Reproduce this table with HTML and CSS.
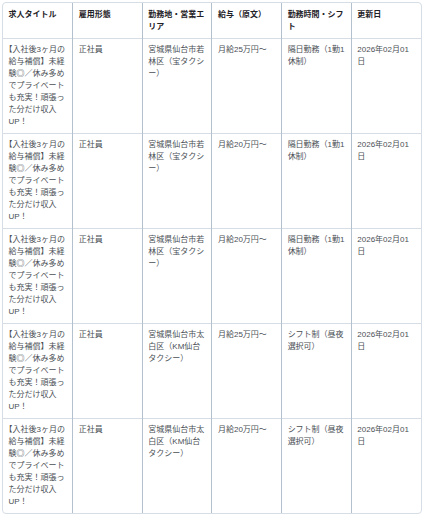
FILE: index.html
```html
<!DOCTYPE html>
<html lang="ja">
<head>
<meta charset="utf-8">
<title>求人一覧</title>
<link rel="stylesheet" href="styles.css">
</head>
<body>
<div class="table-wrap">
<table class="jobs">
<thead>
<tr>
<th>求人タイトル</th>
<th>雇用形態</th>
<th>勤務地・営業エリア</th>
<th>給与（原文）</th>
<th>勤務時間・シフト</th>
<th>更新日</th>
</tr>
</thead>
<tbody>
<tr>
<td>【入社後3ヶ月の給与補償】未経験◎／休み多めでプライベートも充実！頑張った分だけ収入UP！</td>
<td>正社員</td>
<td>宮城県仙台市若林区（宝タクシー）</td>
<td>月給25万円〜</td>
<td>隔日勤務（1勤1休制）</td>
<td>2026年02月01日</td>
</tr>
<tr>
<td>【入社後3ヶ月の給与補償】未経験◎／休み多めでプライベートも充実！頑張った分だけ収入UP！</td>
<td>正社員</td>
<td>宮城県仙台市若林区（宝タクシー）</td>
<td>月給20万円〜</td>
<td>隔日勤務（1勤1休制）</td>
<td>2026年02月01日</td>
</tr>
<tr>
<td>【入社後3ヶ月の給与補償】未経験◎／休み多めでプライベートも充実！頑張った分だけ収入UP！</td>
<td>正社員</td>
<td>宮城県仙台市若林区（宝タクシー）</td>
<td>月給20万円〜</td>
<td>隔日勤務（1勤1休制）</td>
<td>2026年02月01日</td>
</tr>
<tr>
<td>【入社後3ヶ月の給与補償】未経験◎／休み多めでプライベートも充実！頑張った分だけ収入UP！</td>
<td>正社員</td>
<td>宮城県仙台市太白区（KM仙台タクシー）</td>
<td>月給25万円〜</td>
<td>シフト制（昼夜選択可）</td>
<td>2026年02月01日</td>
</tr>
<tr>
<td>【入社後3ヶ月の給与補償】未経験◎／休み多めでプライベートも充実！頑張った分だけ収入UP！</td>
<td>正社員</td>
<td>宮城県仙台市太白区（KM仙台タクシー）</td>
<td>月給20万円〜</td>
<td>シフト制（昼夜選択可）</td>
<td>2026年02月01日</td>
</tr>
</tbody>
</table>
</div>
</body>
</html>
```

FILE: styles.css
```css
html, body {
  margin: 0;
  padding: 0;
  background: #ffffff;
}
body {
  font-family: "Liberation Sans", "Noto Sans CJK JP", sans-serif;
  font-size: 8px;
  line-height: 12px;
  color: #4a4f55;
}
.table-wrap {
  width: 418px;
  margin: 2px;
  border: 1px solid #d7dde4;
  border-radius: 4px;
  overflow: hidden;
}
.jobs {
  width: 100%;
  border-collapse: collapse;
  table-layout: fixed;
}
.jobs th,
.jobs td {
  padding: 5px 5.5px;
  text-align: left;
  vertical-align: top;
  border-left: 1px solid #b3c0cd;
  border-top: 1px solid #d7dde4;
  text-spacing-trim: trim-start;
}
.jobs th:first-child,
.jobs td:first-child {
  border-left: none;
}
.jobs thead th {
  padding-top: 6px;
  border-top: none;
  font-weight: bold;
  color: #1f2328;
}
```
